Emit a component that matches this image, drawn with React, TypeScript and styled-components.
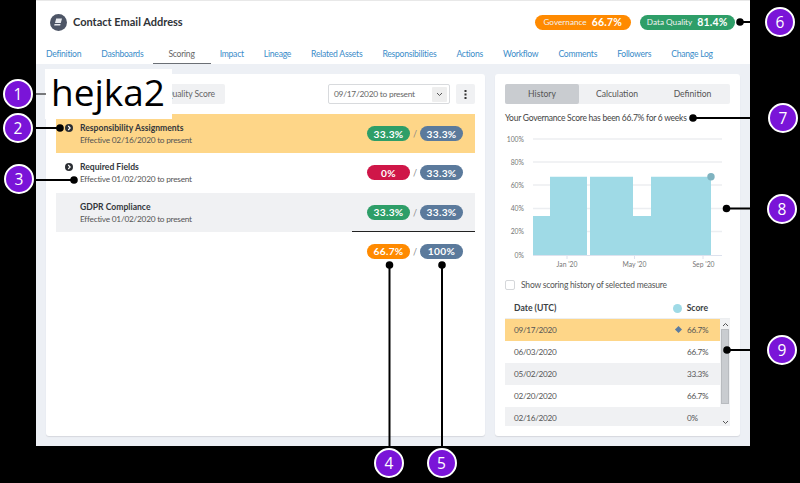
import React from "react";
import styled, { createGlobalStyle } from "styled-components";

const Global = createGlobalStyle`
  html, body { margin: 0; padding: 0; background: #000; }
  body { font-family: "Lato", "Noto Sans", sans-serif; color: #444; }
  #root { width: 800px; height: 483px; position: relative; overflow: hidden; }
  * { box-sizing: border-box; }
`;

const Frame = styled.div`
  width: 714px; height: 446px; margin-left: 36px; background: #edf0f5;
  display: flex; flex-direction: column;
`;
const Header = styled.header`
  background: #fff; height: 64px; border-top: 1px solid #e8e8e8; padding: 0 15px 0 10px;
  display: flex; flex-direction: column;
`;
const TitleRow = styled.div`
  display: flex; align-items: center; justify-content: space-between; height: 42px; padding-left: 4px;
`;
const TitleGroup = styled.div`display: flex; align-items: center; gap: 6px;`;
const AssetIcon = styled.div`
  width: 17px; height: 17px; border-radius: 50%; background: #4d5566;
  display: flex; align-items: center; justify-content: center;
`;
const Title = styled.h1`margin: 0; font-size: 11px; line-height: 14px; font-weight: 700; color: #2f3338;`;
const Scores = styled.div`display: flex; gap: 9px;`;
const ScorePill = styled.div<{ $bg: string }>`
  height: 15px; width: 95.5px; border-radius: 8px; background: ${p => p.$bg};
  display: flex; align-items: center; justify-content: center; gap: 5px;
  font-size: 8.2px; color: #f2f2f2; white-space: nowrap;
  b { font-size: 10.5px; font-weight: 700; color: #fff; letter-spacing: .2px; }
`;
const Nav = styled.nav`display: flex; gap: 20px; height: 21px; font-size: 8.6px; letter-spacing: -.25px;`;
const NavItem = styled.span<{ $active?: boolean }>`
  position: relative; line-height: 23px; white-space: nowrap;
  color: ${p => (p.$active ? "#666" : "#3a8cc9")};
  margin: ${p => (p.$active ? "0 5px" : "0")};
  ${p => p.$active && `&::after { content: ""; position: absolute; left: -15px; right: -16px; bottom: 0; height: 1.5px; background: #6b6f75; }`}
`;

const Body = styled.main`display: flex; gap: 10px; padding: 10px; flex: 1; min-height: 0;`;
const Card = styled.section<{ $w: number }>`
  width: ${p => p.$w}px; height: 362px; background: #fff; border-radius: 3px;
  box-shadow: 0 1px 1px #d5d8de; padding: 10px; display: flex; flex-direction: column;
`;
const Toolbar = styled.div`display: flex; justify-content: space-between; gap: 6px; height: 30px;`;
const GhostButton = styled.div`
  height: 20px; margin-left: 60px; width: 109px; border-radius: 2px; background: #f0f1f3; color: #666;
  font-size: 8.6px; letter-spacing: -.1px; line-height: 20px; text-align: right; padding-right: 10px;
`;
const ToolbarRight = styled.div`display: flex; gap: 6px;`;
const Select = styled.div`
  width: 122px; height: 20px; border: 1px solid #d8dadd; border-radius: 2px; background: #fff;
  display: flex; align-items: center; justify-content: space-between; padding: 0 2px 0 5px;
  font-size: 8.4px; letter-spacing: -.25px; color: #666;
`;
const SelectCaret = styled.span`
  width: 15px; height: 15px; background: #eee; border-radius: 1px; display: flex; align-items: center; justify-content: center;
`;
const IconButton = styled.div`
  width: 19px; height: 20px; background: #f0f1f3; border-radius: 2px;
  display: flex; align-items: center; justify-content: center;
`;
const Rows = styled.div`display: flex; flex-direction: column;`;
const MeasureRow = styled.div<{ $bg: string }>`
  height: 39.33px; background: ${p => p.$bg}; display: flex; align-items: center; justify-content: space-between;
  padding: 0 12px 0 9px;
`;
const MeasureLeft = styled.div`display: flex; gap: 7px; align-items: flex-start; padding-top: 2px;`;
const ChevSlot = styled.div`width: 8px; height: 8px; margin-top: 2px; svg { display: block; }`;
const MeasureName = styled.div`font-size: 8.6px; line-height: 12px; font-weight: 700; color: #33373c;`;
const MeasureDate = styled.div`font-size: 8.3px; letter-spacing: -.25px; line-height: 13px; color: #555;`;
const PillPair = styled.div`display: flex; align-items: center; gap: 0;`;
const Pill = styled.span<{ $bg: string }>`
  width: 43px; height: 15px; border-radius: 8px; background: ${p => p.$bg}; color: #fff;
  font-size: 10.2px; font-weight: 700; letter-spacing: .3px; display: flex; align-items: center; justify-content: center;
`;
const Slash = styled.span`width: 10px; text-align: center; color: #888; font-size: 9px;`;
const TotalRow = styled.div`
  align-self: flex-end; width: 123px; border-top: 1px solid #222; margin-top: -1px; height: 28px; padding: 12px 12px 0 15px;
`;

const Segments = styled.div`
  display: flex; height: 20px; background: #f0f1f3; border-radius: 2px; flex-shrink: 0; margin-bottom: 8px;
`;
const Segment = styled.div<{ $active?: boolean; $w: number }>`
  width: ${p => p.$w}px; font-size: 8.6px; line-height: 20px; text-align: center; color: #555;
  background: ${p => (p.$active ? "#c9ccd0" : "transparent")}; border-radius: 2px;
`;
const Sentence = styled.p`margin: 0; font-size: 8.5px; letter-spacing: -.25px; line-height: 13px; color: #444; height: 14px; white-space: nowrap;`;
const ChartSvg = styled.svg`display: block; margin: 1px 0 0 -1px; flex-shrink: 0;`;
const AxisText = styled.text`font-family: "Lato", sans-serif; font-size: 6.8px; fill: #777;`;
const CheckRow = styled.label`display: flex; align-items: center; gap: 6px; font-size: 8.5px; letter-spacing: -.2px; color: #555; height: 12px; margin-top: 6px;`;
const CheckBox = styled.span`width: 10px; height: 10px; border: 1px solid #d5d7da; border-radius: 2px; background: #fff;`;
const TableHead = styled.div`
  display: flex; justify-content: space-between; align-items: center; height: 20px; margin-top: 8px; padding: 0 22px 0 9px;
  font-size: 8.6px; font-weight: 700; color: #3a3e43; border-bottom: 1px solid #eceef0;
`;
const ScoreHead = styled.span`display: flex; align-items: center; gap: 5px;`;
const LegendDot = styled.span`width: 9px; height: 9px; border-radius: 50%; background: #9fdae6;`;
const TableWrap = styled.div`display: flex; position: relative; height: 108px; overflow: hidden; background: #f0f1f3;`;
const TableRows = styled.div`flex: 1; display: flex; flex-direction: column;`;
const TableRow = styled.div<{ $bg: string }>`
  height: 22px; flex-shrink: 0; background: ${p => p.$bg}; display: flex; align-items: center; padding: 0 11px 0 9px;
  font-size: 8.2px; letter-spacing: -.3px; color: #555;
`;
const DateCell = styled.span`flex: 1;`;
const ScoreCell = styled.span`width: 22px;`;
const Diamond = styled.span`width: 5px; height: 5px; background: #5b7ba0; transform: rotate(45deg); margin-right: 6px;`;
const ScrollBar = styled.div`
  width: 10px; flex-shrink: 0; background: #f0f1f3; display: flex; flex-direction: column; align-items: center; padding-top: 3px;
`;
const Thumb = styled.div`width: 8px; height: 75px; background: #c9ccd0; border: 1px solid #b8bbbf; margin: 2px 0 16px;`;

const Overlay = styled.svg`position: absolute; inset: 0; pointer-events: none;`;
const Marker = styled.div<{ $x: number; $y: number }>`
  position: absolute; left: ${p => p.$x - 15}px; top: ${p => p.$y - 15}px; width: 30px; height: 30px; border-radius: 50%;
  background: #7a14d8; border: 2px solid #fff; color: #fff; font-family: "Open Sans", sans-serif; font-size: 15.5px;
  display: flex; align-items: center; justify-content: center;
`;
const Label = styled.div`
  position: absolute; left: 45px; top: 69px; width: 127px; height: 50px; background: #fff; color: #000;
  font-family: "Open Sans", sans-serif; font-size: 37px; line-height: 46px; padding-left: 6px; white-space: nowrap;
`;

const Chev = () => (
  <svg width="8" height="8" viewBox="0 0 8 8">
    <circle cx="4" cy="4" r="4" fill="#2b2e33" />
    <path d="M3.2 2 5.2 4 3.2 6" fill="none" stroke="#fff" strokeWidth="1.1" />
  </svg>
);
const Caret = ({ up }: { up?: boolean }) => (
  <svg width="7" height="5" viewBox="0 0 7 5">
    <path d={up ? "M1 4 3.5 1.5 6 4" : "M1 1 3.5 3.5 6 1"} fill="none" stroke="#555" strokeWidth="1" />
  </svg>
);

const tabs = ["Definition", "Dashboards", "Scoring", "Impact", "Lineage", "Related Assets", "Responsibilities", "Actions", "Workflow", "Comments", "Followers", "Change Log"];
const measures = [
  { name: "Responsibility Assignments", date: "Effective 02/16/2020 to present", bg: "#fed688", chev: true, score: "33.3%", color: "#2e9e68" },
  { name: "Required Fields", date: "Effective 01/02/2020 to present", bg: "#fff", chev: true, score: "0%", color: "#cf1648" },
  { name: "GDPR Compliance", date: "Effective 01/02/2020 to present", bg: "#f0f1f3", chev: false, score: "33.3%", color: "#2e9e68" },
];
const history = [
  { d: "09/17/2020", s: "66.7%", bg: "#fed688", mark: true },
  { d: "06/03/2020", s: "66.7%", bg: "#fff" },
  { d: "05/02/2020", s: "33.3%", bg: "#f0f1f3" },
  { d: "02/20/2020", s: "66.7%", bg: "#fff" },
  { d: "02/16/2020", s: "0%", bg: "#f0f1f3" },
];
const grid = [["100%", 139], ["80%", 162], ["60%", 185], ["40%", 208.5], ["20%", 231.5]] as const;
const markers = [
  [18, 94, 1], [18, 128, 2], [19, 179, 3], [389, 463, 4], [441.5, 463, 5],
  [780, 21.5, 6], [783, 118, 7], [782, 208.5, 8], [782, 350, 9],
] as const;
const leaders = [
  [30, 94, 46, 94], [30, 128, 60, 128], [30, 180, 74, 180], [389.5, 265, 389.5, 450], [442, 265, 442, 450],
  [740, 22, 768, 22], [693, 118, 770, 118], [726.5, 208.5, 770, 208.5], [727, 350, 770, 350],
] as const;
const dots = [[60, 128], [74, 180], [389.5, 265], [442, 265], [740, 22], [693, 118], [726.5, 208.5], [727, 350]] as const;

export default function App() {
  return (
    <>
      <Global />
      <Frame>
        <Header>
          <TitleRow>
            <TitleGroup>
              <AssetIcon>
                <svg width="9" height="8" viewBox="0 0 9 8">
                  <path d="M2.2 0.5H8L6.8 5H1Z" fill="#e8eaee" />
                  <path d="M0.5 6H6.5L6.2 7.5H0.2Z" fill="#e8eaee" />
                </svg>
              </AssetIcon>
              <Title>Contact Email Address</Title>
            </TitleGroup>
            <Scores>
              <ScorePill $bg="#ff8a00">Governance <b>66.7%</b></ScorePill>
              <ScorePill $bg="#2e9e68">Data Quality <b>81.4%</b></ScorePill>
            </Scores>
          </TitleRow>
          <Nav>
            {tabs.map(t => <NavItem key={t} $active={t === "Scoring"}>{t}</NavItem>)}
          </Nav>
        </Header>
        <Body>
          <Card $w={439}>
            <Toolbar>
              <GhostButton>Quality Score</GhostButton>
              <ToolbarRight>
                <Select>
                  09/17/2020 to present
                  <SelectCaret><Caret /></SelectCaret>
                </Select>
                <IconButton>
                  <svg width="3" height="9" viewBox="0 0 3 9"><path d="M.5 0h2v2h-2zM.5 3.5h2v2h-2zM.5 7h2v2h-2z" fill="#333" /></svg>
                </IconButton>
              </ToolbarRight>
            </Toolbar>
            <Rows>
              {measures.map(m => (
                <MeasureRow key={m.name} $bg={m.bg}>
                  <MeasureLeft>
                    <ChevSlot>{m.chev && <Chev />}</ChevSlot>
                    <div>
                      <MeasureName>{m.name}</MeasureName>
                      <MeasureDate>{m.date}</MeasureDate>
                    </div>
                  </MeasureLeft>
                  <PillPair>
                    <Pill $bg={m.color}>{m.score}</Pill><Slash>/</Slash><Pill $bg="#5b7a9c">33.3%</Pill>
                  </PillPair>
                </MeasureRow>
              ))}
              <TotalRow>
                <PillPair>
                  <Pill $bg="#ff8a00">66.7%</Pill><Slash>/</Slash><Pill $bg="#5b7a9c">100%</Pill>
                </PillPair>
              </TotalRow>
            </Rows>
          </Card>
          <Card $w={245}>
            <Segments>
              <Segment $w={74} $active>History</Segment>
              <Segment $w={76}>Calculation</Segment>
              <Segment $w={75}>Definition</Segment>
            </Segments>
            <Sentence>Your Governance Score has been 66.7% for 6 weeks</Sentence>
            <ChartSvg width="226" height="146" viewBox="504 127 226 146">
              {grid.map(([l, y]) => (
                <g key={l}>
                  <line x1="533" x2="722" y1={y} y2={y} stroke="#eceef1" strokeWidth="1.5" />
                  <AxisText x="524" y={y + 2.5} textAnchor="end">{l}</AxisText>
                </g>
              ))}
              <AxisText x="524" y="257.5" textAnchor="end">0%</AxisText>
              <path d="M533 255V216H550V176.7H587V255Z M590 255V176.7H633V216H651V176.7H711V255Z" fill="#9fdae6" />
              <line x1="533" x2="722" y1="255.5" y2="255.5" stroke="#dde2ee" />
              <circle cx="711" cy="176.7" r="3.7" fill="#7fb3c0" />
              {[567, 634.5, 703].map(x => <line key={x} x1={x} x2={x} y1="255" y2="259" stroke="#dde2ee" />)}
              <AxisText x="567" y="267" textAnchor="middle">Jan '20</AxisText>
              <AxisText x="634.5" y="267" textAnchor="middle">May '20</AxisText>
              <AxisText x="703.5" y="267" textAnchor="middle">Sep '20</AxisText>
            </ChartSvg>
            <CheckRow><CheckBox />Show scoring history of selected measure</CheckRow>
            <TableHead>
              <span>Date (UTC)</span>
              <ScoreHead><LegendDot />Score</ScoreHead>
            </TableHead>
            <TableWrap>
              <TableRows>
                {history.map(h => (
                  <TableRow key={h.d} $bg={h.bg}>
                    <DateCell>{h.d}</DateCell>
                    {h.mark && <Diamond />}
                    <ScoreCell>{h.s}</ScoreCell>
                  </TableRow>
                ))}
              </TableRows>
              <ScrollBar>
                <Caret up />
                <Thumb />
                <Caret />
              </ScrollBar>
            </TableWrap>
          </Card>
        </Body>
      </Frame>
      <Label>hejka2</Label>
      <Overlay width="800" height="483" viewBox="0 0 800 483">
        {leaders.map(([x1, y1, x2, y2], i) => (
          <line key={i} x1={x1} y1={y1} x2={x2} y2={y2} stroke="#000" strokeWidth={i === 0 ? 1 : 2} />
        ))}
        {dots.map(([cx, cy], i) => <circle key={i} cx={cx} cy={cy} r="3.8" fill="#000" />)}
      </Overlay>
      {markers.map(([x, y, n]) => <Marker key={n} $x={x} $y={y}>{n}</Marker>)}
    </>
  );
}
